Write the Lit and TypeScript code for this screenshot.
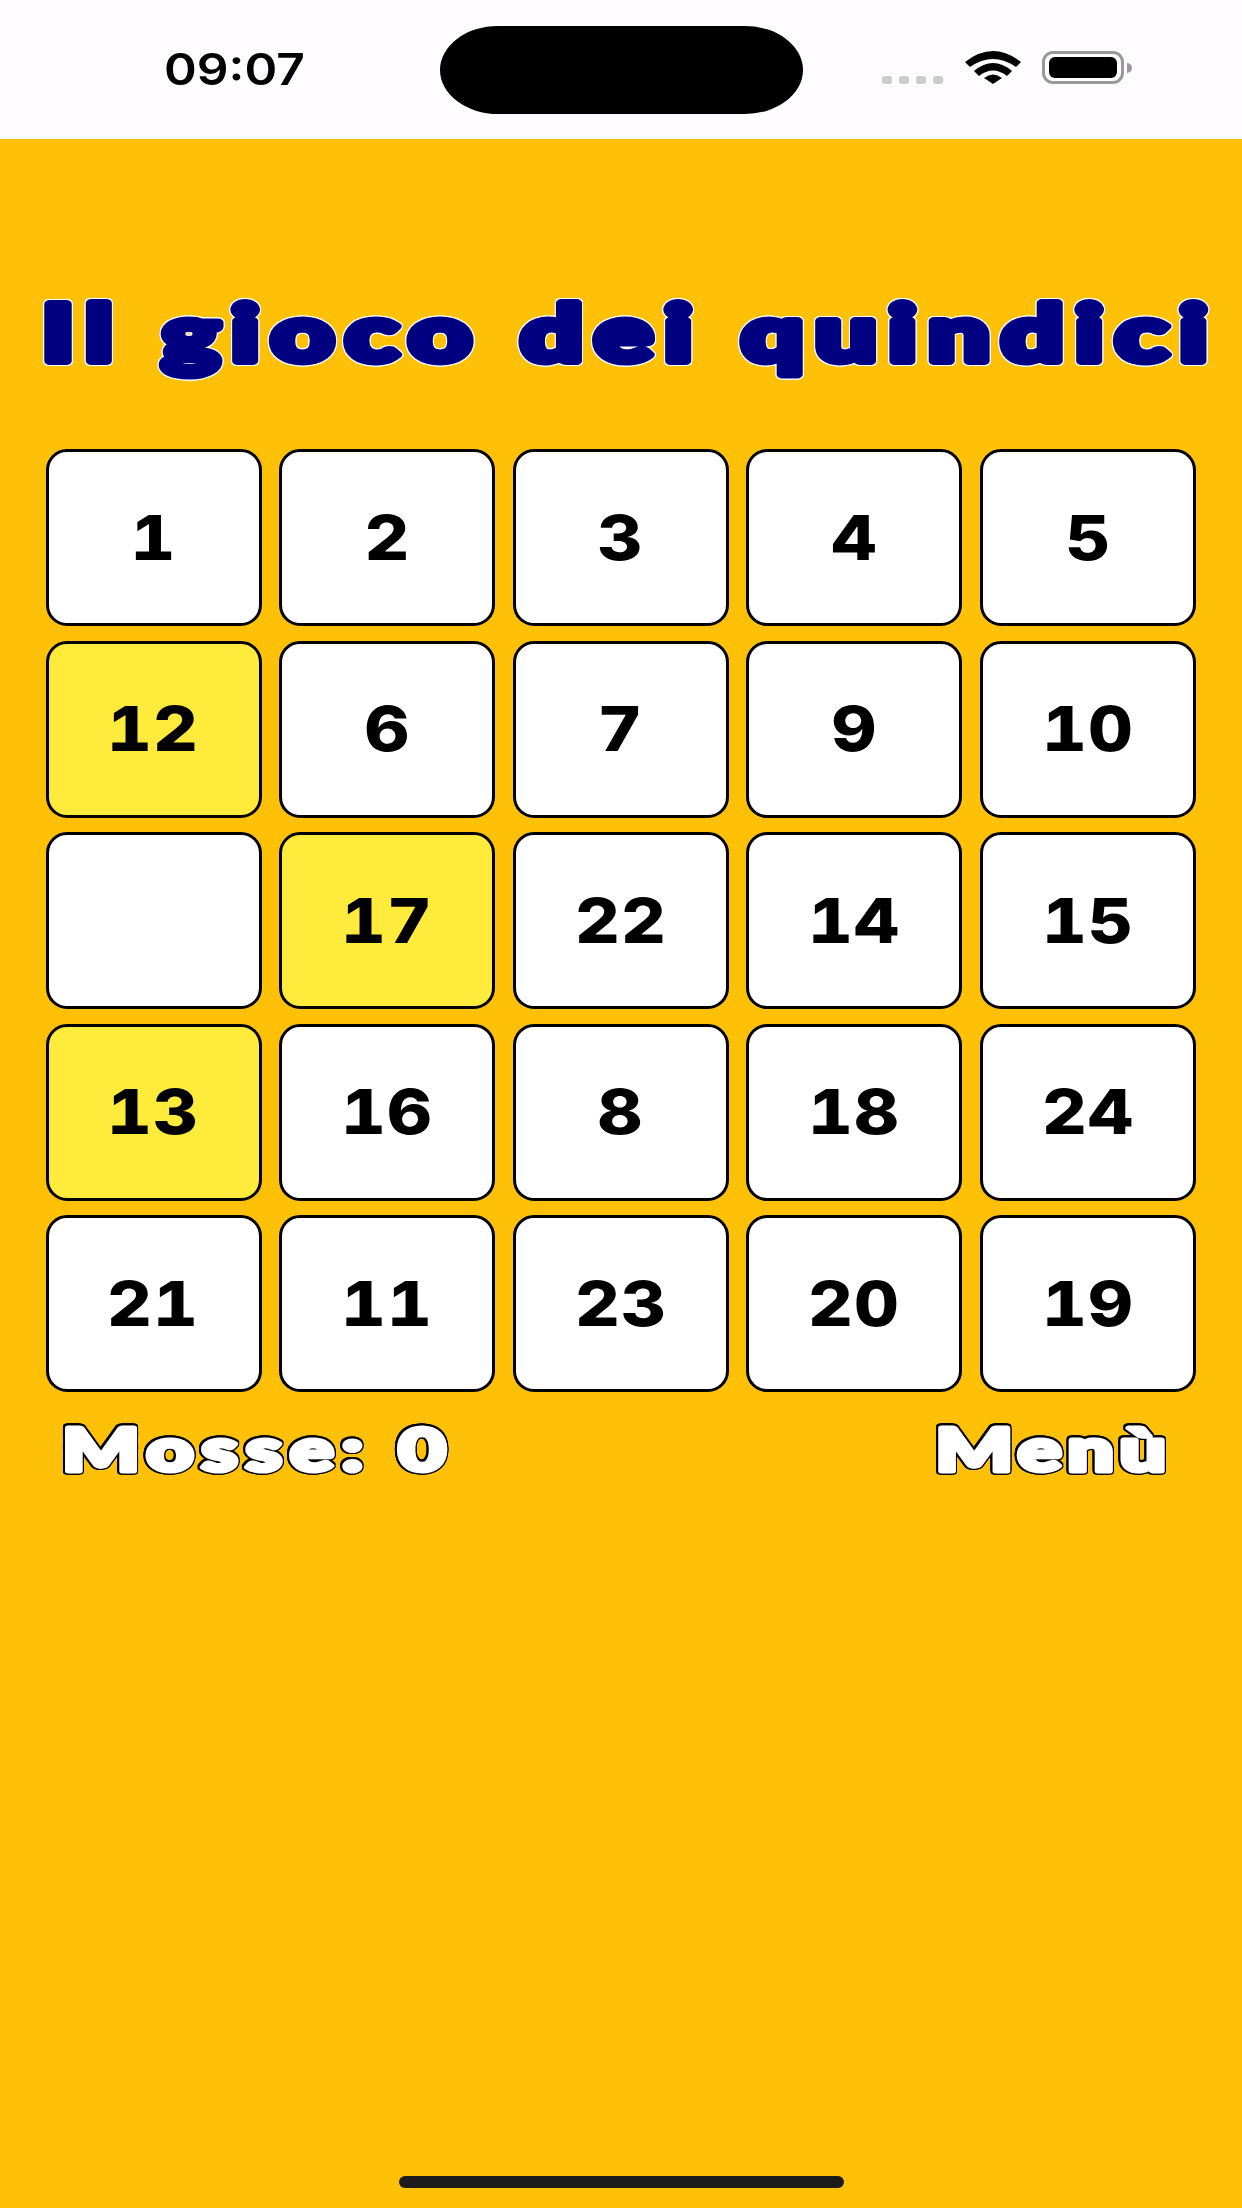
import { LitElement, html, css } from "lit";
import { customElement } from "lit/decorators.js";

const rows: { n: string; hl?: boolean }[][] = [
  [{ n: "1" }, { n: "2" }, { n: "3" }, { n: "4" }, { n: "5" }],
  [{ n: "12", hl: true }, { n: "6" }, { n: "7" }, { n: "9" }, { n: "10" }],
  [{ n: "" }, { n: "17", hl: true }, { n: "22" }, { n: "14" }, { n: "15" }],
  [{ n: "13", hl: true }, { n: "16" }, { n: "8" }, { n: "18" }, { n: "24" }],
  [{ n: "21" }, { n: "11" }, { n: "23" }, { n: "20" }, { n: "19" }],
];

@customElement("app-root")
export class AppRoot extends LitElement {
  static styles = css`
    :host {
      display: flex;
      flex-direction: column;
      width: 1242px;
      height: 2208px;
      background: #ffc107;
      overflow: hidden;
      font-family: Inter, "Liberation Sans", Arial, sans-serif;
    }
    .status {
      height: 139px;
      flex: none;
      background: #fefcff;
      display: flex;
      align-items: flex-start;
      padding-left: 164px;
      box-sizing: border-box;
    }
    .time {
      width: 141px;
      margin-top: 46px;
      font: 600 44px/46px Inter, "Liberation Sans", sans-serif;
      color: #000;
      transform: scaleX(1.13);
      transform-origin: left center;
      white-space: nowrap;
    }
    .island {
      width: 363px;
      height: 88px;
      margin: 26px 0 0 135px;
      background: #000;
      border-radius: 58px / 44px;
      flex: none;
    }
    .dots {
      display: flex;
      gap: 7px;
      margin: 76px 0 0 79px;
    }
    .dots i {
      width: 10px;
      height: 8px;
      border-radius: 3px;
      background: #cccccc;
    }
    .wifi {
      width: 56px;
      height: 33px;
      margin: 51px 0 0 22px;
      flex: none;
    }
    .battery {
      width: 82px;
      height: 33px;
      margin: 51px 0 0 21px;
      box-sizing: border-box;
      border: 3px solid #999;
      border-radius: 11px;
      padding: 3px 4px;
      flex: none;
    }
    .battery b {
      display: block;
      height: 100%;
      background: #000;
      border-radius: 6px;
    }
    .nub {
      width: 5px;
      height: 10px;
      margin: 63px 0 0 3px;
      background: #999;
      border-radius: 0 5px 5px 0;
      flex: none;
    }
    .title {
      display: block;
      width: 1242px;
      height: 120px;
      margin-top: 141px;
      flex: none;
      filter: drop-shadow(1px 0 0 #fff) drop-shadow(-1px 0 0 #fff)
        drop-shadow(0 1px 0 #fff) drop-shadow(0 -1px 0 #fff);
    }
    .title text {
      font-family: Lato, "Liberation Sans", sans-serif;
      font-weight: 900;
      font-size: 79px;
      fill: #000080;
      stroke: #000080;
      stroke-width: 8px;
      stroke-linejoin: round;
    }
    .board {
      display: grid;
      grid-template-columns: repeat(5, 216px);
      grid-auto-rows: 177px;
      column-gap: 17.65px;
      row-gap: 14.5px;
      padding-left: 45.5px;
      margin-top: 49px;
    }
    .tile {
      box-sizing: border-box;
      border: 3px solid #000;
      border-radius: 21px;
      background: #fff;
      display: flex;
      align-items: center;
      justify-content: center;
    }
    .tile.hl {
      background: #ffeb3b;
    }
    .tile span {
      font-weight: 800;
      font-size: 62px;
      line-height: 1;
      color: #000;
      font-variant-numeric: tabular-nums;
      letter-spacing: 1px;
      transform: scaleX(1.12);
    }
    .foot {
      display: flex;
      justify-content: space-between;
      height: 80px;
      margin-top: 20px;
      padding: 0 70px 0 58px;
      flex: none;
    }
    .foot svg {
      display: block;
      height: 80px;
      overflow: visible;
      filter: drop-shadow(1.4px 0 0 #000) drop-shadow(-1.4px 0 0 #000)
        drop-shadow(0 1.4px 0 #000) drop-shadow(0 -1.4px 0 #000);
    }
    .foot text {
      font-family: Lato, "Liberation Sans", sans-serif;
      font-weight: 900;
      font-size: 59px;
      fill: #fff;
      stroke: #fff;
      stroke-width: 5px;
      stroke-linejoin: round;
    }
    .home {
      width: 445px;
      height: 12px;
      margin: auto auto 20px;
      background: #1c1c1c;
      border-radius: 6px;
      flex: none;
    }
  `;

  render() {
    return html`
      <div class="status">
        <div class="time">09:07</div>
        <div class="island"></div>
        <div class="dots"><i></i><i></i><i></i><i></i></div>
        <svg class="wifi" viewBox="0 0 56 33">
          <path d="M0 11Q28 -11 56 11L51 16Q28 0 5 16Z" />
          <path d="M9 20Q28 4 47 20L42 25Q28 14 14 25Z" />
          <path d="M19 27Q28 20 37 27L28 33Z" />
        </svg>
        <div class="battery"><b></b></div>
        <div class="nub"></div>
      </div>
      <svg class="title" viewBox="0 0 1242 120">
        <text transform="scale(1.38 1)" x="30" y="81.5" textLength="845" lengthAdjust="spacing">Il gioco dei quindici</text>
      </svg>
      <div class="board">
        ${rows.flat().map(
          (t) => html`<div class="tile ${t.hl ? "hl" : ""}"><span>${t.n}</span></div>`
        )}
      </div>
      <div class="foot">
        <svg width="395" viewBox="0 0 395 80">
          <text transform="scale(1.38 1)" x="3" y="59" textLength="278" lengthAdjust="spacing">Mosse: 0</text>
        </svg>
        <svg width="240" viewBox="0 0 240 80">
          <text transform="scale(1.38 1)" x="2.5" y="59" textLength="167" lengthAdjust="spacing">Menù</text>
        </svg>
      </div>
      <div class="home"></div>
    `;
  }
}
